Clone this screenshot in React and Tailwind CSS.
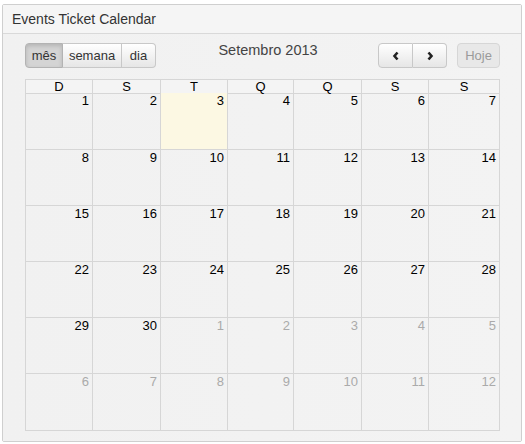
import React from 'react';

const weekDays = ['D', 'S', 'T', 'Q', 'Q', 'S', 'S'];

// setembro 2013 starts on sunday; 6 rows of 7 days
const buildWeeks = () => {
  const weeks = [];
  let day = 1;
  let next = 1;
  for (let w = 0; w < 6; w++) {
    const row = [];
    for (let d = 0; d < 7; d++) {
      if (day <= 30) {
        row.push({ n: day, current: true, today: day === 3 });
        day++;
      } else {
        row.push({ n: next, current: false });
        next++;
      }
    }
    weeks.push(row);
  }
  return weeks;
};

const cols = 'grid grid-cols-[67px_68px_67px_66px_68px_67px_1fr]';

export default function App() {
  const weeks = buildWeeks();

  return (
    <div className="w-[525px] h-[444px] bg-white pt-[4px] pl-[2px] pr-[3px] pb-[2px] font-['Liberation_Sans',Arial,sans-serif]">
      <div className="h-[438px] border border-[#cfcfcf] rounded-[2px] bg-[#f2f2f2] flex flex-col">
        {/* Header */}
        <div className="h-[29px] border-b border-[#d9d9d9] bg-[#f5f5f5] px-[9px] flex items-center">
          <h3 className="text-[14px] text-[#333]">Events Ticket Calendar</h3>
        </div>

        {/* Body */}
        <div className="flex-1 pl-[22px] pr-[21px] pt-[9px] bg-gradient-to-r from-[#f1f1f1] to-[#f3f3f3]">
          {/* Toolbar */}
          <div className="relative flex items-start h-[36px]">
            <div className="flex h-[25px] text-[13px] text-[#333]">
              <button className="w-[38px] h-full rounded-l-[4px] border border-[#b3b3b3] bg-[#d4d4d4] shadow-[inset_0_2px_4px_rgba(0,0,0,0.15)]">mês</button>
              <button className="w-[59px] h-full border-y border-r border-[#c8c8c8] bg-gradient-to-b from-[#ffffff] to-[#e6e6e6]">semana</button>
              <button className="w-[34px] h-full rounded-r-[4px] border-y border-r border-[#c8c8c8] bg-gradient-to-b from-[#ffffff] to-[#e6e6e6]">dia</button>
            </div>

            <div className="flex-1 text-center text-[14.5px] text-[#444] leading-[14px] pl-[2px]">Setembro 2013</div>

            <div className="flex h-[25px] mr-[10px]">
              <button className="w-[35px] h-full rounded-l-[4px] border border-[#c8c8c8] bg-gradient-to-b from-[#ffffff] to-[#e6e6e6] flex items-center justify-center">
                <svg width="8" height="10" viewBox="0 0 8 10">
                  <path d="M5.5 1.5 L2.5 5 L5.5 8.5" fill="none" stroke="#222" strokeWidth="2.6" />
                </svg>
              </button>
              <button className="w-[34px] h-full rounded-r-[4px] border-y border-r border-[#c8c8c8] bg-gradient-to-b from-[#ffffff] to-[#e6e6e6] flex items-center justify-center">
                <svg width="8" height="10" viewBox="0 0 8 10">
                  <path d="M2.5 1.5 L5.5 5 L2.5 8.5" fill="none" stroke="#222" strokeWidth="2.6" />
                </svg>
              </button>
            </div>
            <button className="w-[43px] h-[25px] rounded-[4px] border border-[#d6d6d6] bg-[#e8e8e8] text-[13px] text-[#9a9a9a]">Hoje</button>
          </div>

          {/* Calendar grid */}
          <div className="w-[475px] border-l border-t border-[#d6d6d6] text-[13px]">
            <div className={`${cols} h-[13px] leading-[13px]`}>
              {weekDays.map((d, i) => (
                <div key={i} className="text-center text-black border-r border-b border-[#d6d6d6] bg-[#f4f4f4]">{d}</div>
              ))}
            </div>
            {weeks.map((row, w) => (
              <div key={w} className={`${cols} ${w === 0 || w === 5 ? 'h-[57px]' : 'h-[56px]'}`}>
                {row.map((c, i) => (
                  <div
                    key={i}
                    className={`border-r border-b border-[#d6d6d6] text-right pr-[3px] pt-[1px] leading-[14px] ${c.today ? 'bg-[#fcf8e3]' : ''} ${c.current ? 'text-black' : 'text-[#aaa]'}`}
                  >
                    {c.n}
                  </div>
                ))}
              </div>
            ))}
          </div>
        </div>
      </div>
    </div>
  );
}
